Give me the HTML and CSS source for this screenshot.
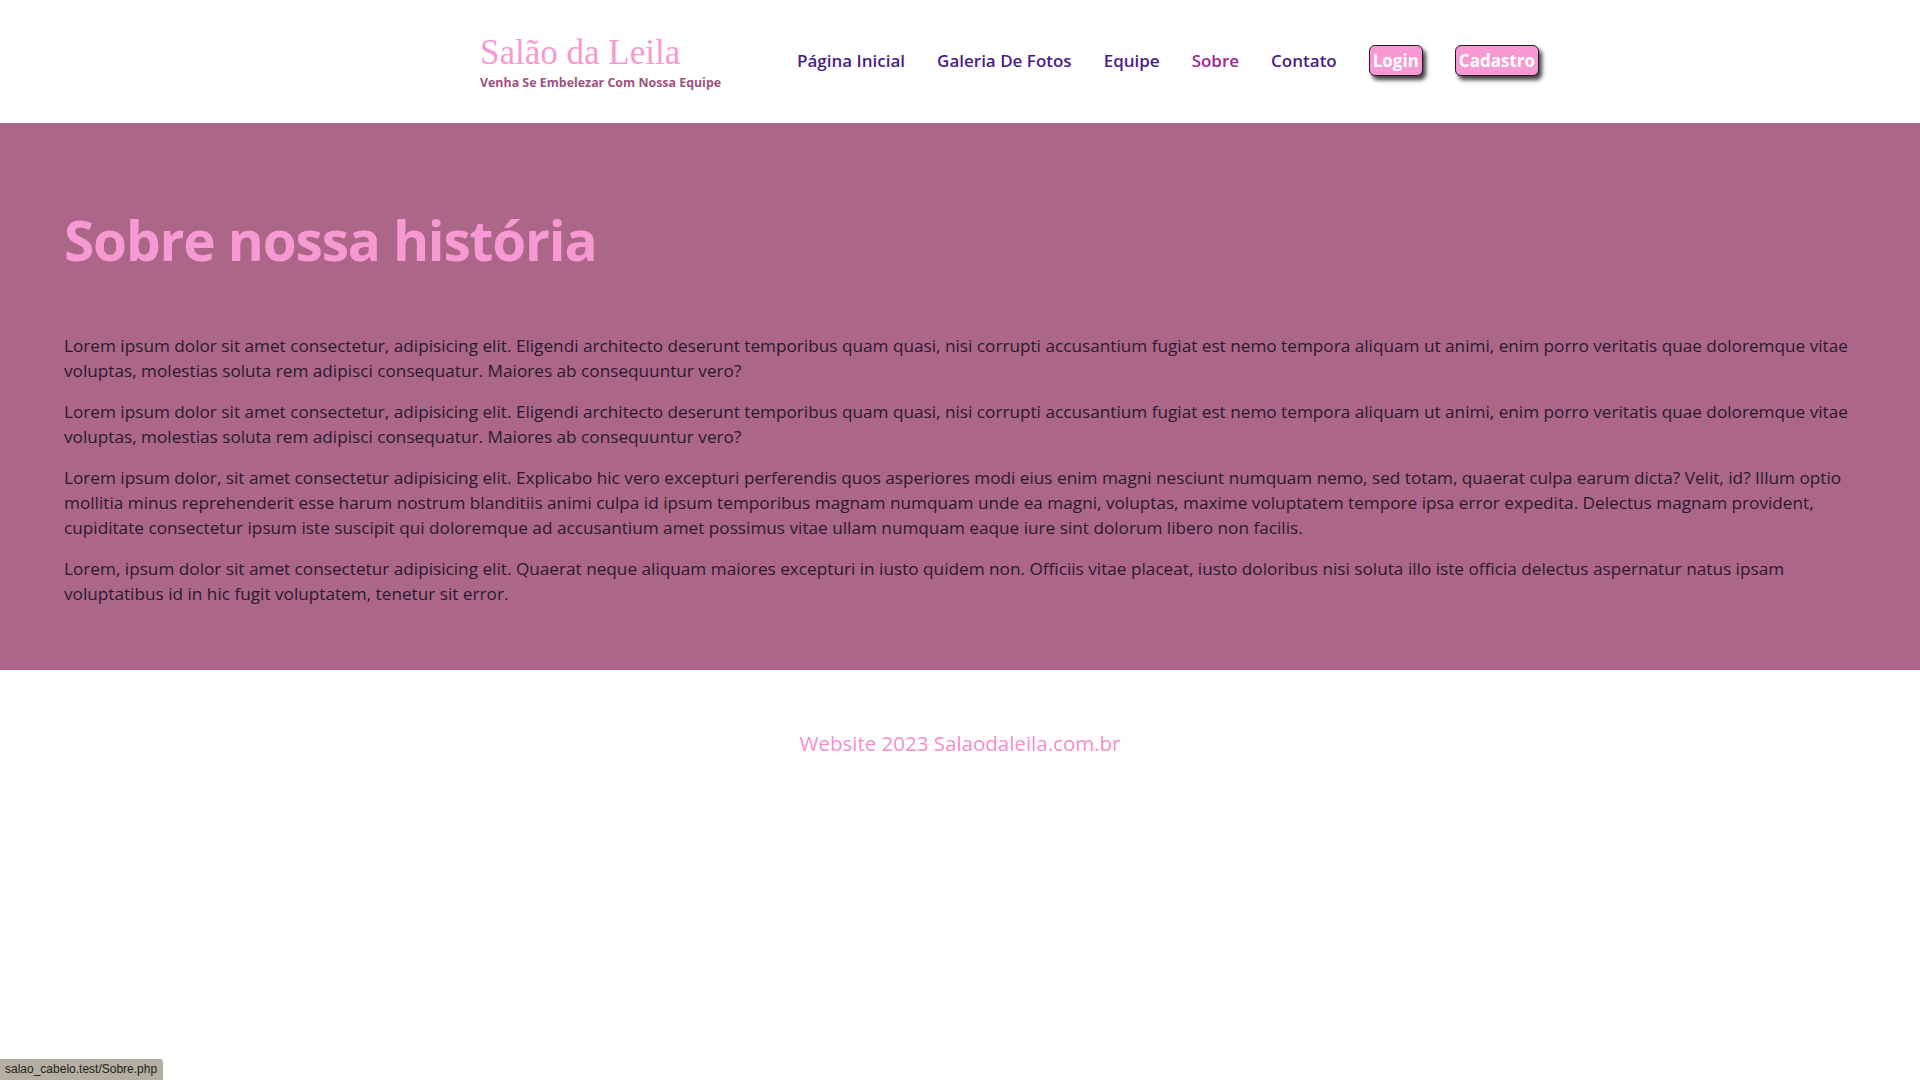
FILE: index.html
```html
<!DOCTYPE html>
<html lang="pt-br">
<head>
<meta charset="utf-8">
<title>Sobre - Salão da Leila</title>
<link rel="stylesheet" href="styles.css">
</head>
<body>
<header class="header">
  <div class="header-inner">
    <div class="brand">
      <div class="brand-name">Salão da Leila</div>
      <div class="brand-tag">Venha Se Embelezar Com Nossa Equipe</div>
    </div>
    <nav class="nav">
      <a class="nav-link" href="#">Página Inicial</a>
      <a class="nav-link" href="#">Galeria De Fotos</a>
      <a class="nav-link" href="#">Equipe</a>
      <a class="nav-link active" href="#">Sobre</a>
      <a class="nav-link" href="#">Contato</a>
      <a class="btn" href="#">Login</a>
      <a class="btn" href="#">Cadastro</a>
    </nav>
  </div>
</header>
<main class="about">
  <h1 class="about-title">Sobre nossa história</h1>
  <p class="about-text">Lorem ipsum dolor sit amet consectetur, adipisicing elit. Eligendi architecto deserunt temporibus quam quasi, nisi corrupti accusantium fugiat est nemo tempora aliquam ut animi, enim porro veritatis quae doloremque vitae voluptas, molestias soluta rem adipisci consequatur. Maiores ab consequuntur vero?</p>
  <p class="about-text">Lorem ipsum dolor sit amet consectetur, adipisicing elit. Eligendi architecto deserunt temporibus quam quasi, nisi corrupti accusantium fugiat est nemo tempora aliquam ut animi, enim porro veritatis quae doloremque vitae voluptas, molestias soluta rem adipisci consequatur. Maiores ab consequuntur vero?</p>
  <p class="about-text">Lorem ipsum dolor, sit amet consectetur adipisicing elit. Explicabo hic vero excepturi perferendis quos asperiores modi eius enim magni nesciunt numquam nemo, sed totam, quaerat culpa earum dicta? Velit, id? Illum optio mollitia minus reprehenderit esse harum nostrum blanditiis animi culpa id ipsum temporibus magnam numquam unde ea magni, voluptas, maxime voluptatem tempore ipsa error expedita. Delectus magnam provident, cupiditate consectetur ipsum iste suscipit qui doloremque ad accusantium amet possimus vitae ullam numquam eaque iure sint dolorum libero non facilis.</p>
  <p class="about-text">Lorem, ipsum dolor sit amet consectetur adipisicing elit. Quaerat neque aliquam maiores excepturi in iusto quidem non. Officiis vitae placeat, iusto doloribus nisi soluta illo iste officia delectus aspernatur natus ipsam voluptatibus id in hic fugit voluptatem, tenetur sit error.</p>
</main>
<footer class="footer">
  <p class="footer-text">Website 2023 Salaodaleila.com.br</p>
</footer>
<div class="status">salao_cabelo.test/Sobre.php</div>
</body>
</html>
```
FILE: styles.css
```css
* { box-sizing: border-box; }
html, body { margin: 0; padding: 0; }
body {
  font-family: "Open Sans", "Noto Sans", sans-serif;
  background: #ffffff;
  color: #2b1a2e;
}
.header {
  height: 123px;
  background: #ffffff;
}
.header-inner {
  display: flex;
  align-items: center;
  height: 100%;
  padding-left: 480px;
  padding-bottom: 2px;
}
.brand {
  display: flex;
  flex-direction: column;
  width: 317px;
}
.brand-name {
  font-family: "Liberation Serif", "DejaVu Serif", serif;
  font-size: 35px;
  line-height: 1.1;
  color: #f79ad3;
  margin-top: 4px;
}
.brand-tag {
  font-size: 12.4px;
  font-weight: 700;
  color: #a0517f;
  margin-top: 1px;
}
.nav {
  display: flex;
  align-items: center;
  gap: 32px;
}
.nav-link {
  font-size: 17px;
  font-weight: 600;
  color: #4a1d86;
  text-decoration: none;
}
.nav-link.active { color: #a1259a; }
.btn {
  display: inline-flex;
  align-items: center;
  justify-content: center;
  height: 31px;
  padding: 0 3px;
  background: #f799d3;
  border: 1px solid #2a1a22;
  border-radius: 6px;
  box-shadow: 3px 4px 4px rgba(0,0,0,0.75);
  color: #ffffff;
  font-size: 17px;
  font-weight: 700;
  text-decoration: none;
}
.about {
  background: #ac6688;
  padding: 84px 64px 48px;
}
.about-title {
  margin: 0 0 60px;
  font-size: 55px;
  line-height: 1.2;
  font-weight: 700;
  letter-spacing: -1.2px;
  color: #f799d3;
}
.about-text {
  margin: 0 0 16px;
  font-size: 17.2px;
  line-height: 25px;
  color: #2b1a2e;
}
.footer {
  padding: 59px 0 45px;
  text-align: center;
}
.footer-text {
  margin: 0;
  font-size: 20.5px;
  font-weight: 500;
  color: #f48fcc;
}
.status {
  position: fixed;
  left: 0;
  bottom: 0;
  height: 21px;
  padding: 3px 6px 0 5px;
  background: #b5aea3;
  border-top-right-radius: 3px;
  font-family: "Liberation Sans", sans-serif;
  font-size: 12px;
  color: #222;
}
```
